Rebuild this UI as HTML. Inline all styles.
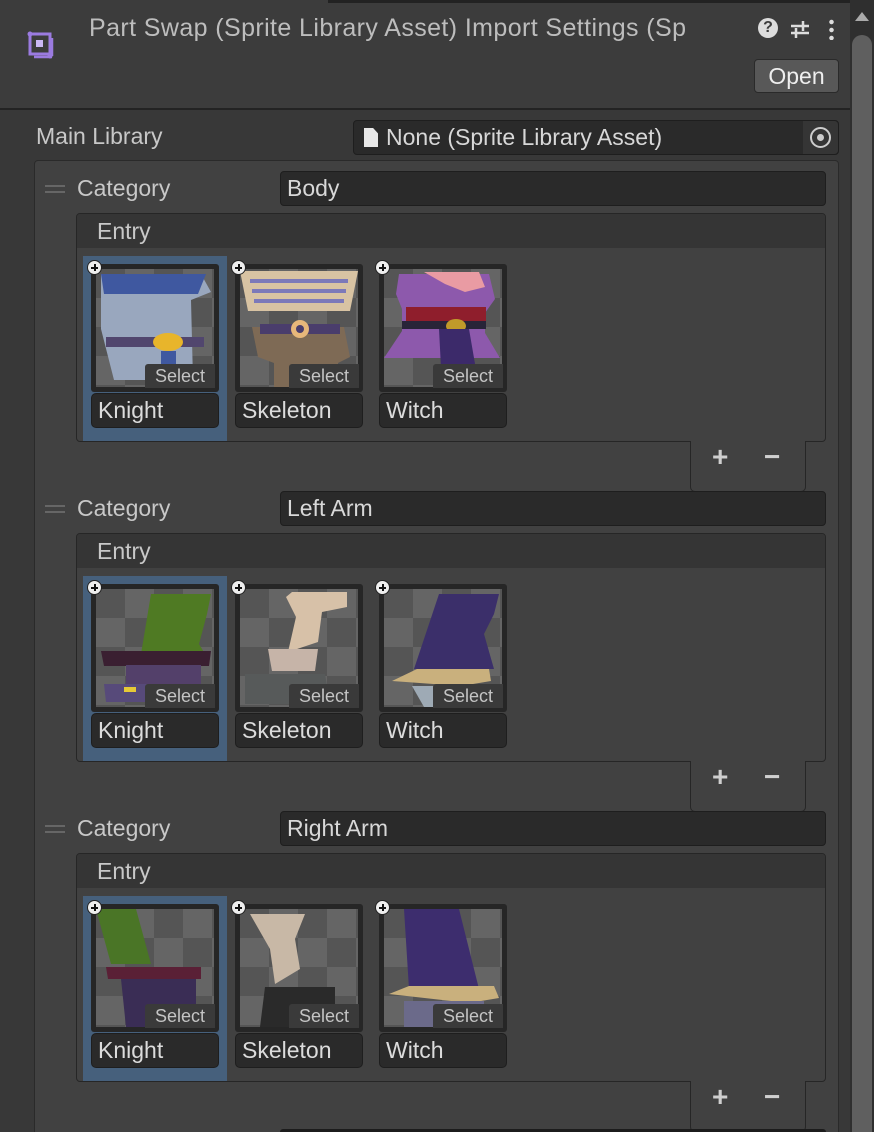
<!DOCTYPE html>
<html style="width:874px;height:1132px;overflow:hidden"><head><meta charset="utf-8"><style>
*{box-sizing:border-box;margin:0;padding:0}
body{width:874px;height:1132px;background:#383838;font-family:"Liberation Sans","DejaVu Sans",sans-serif;color:#d2d2d2;position:relative;overflow:hidden}
.a{position:absolute}
.hdr{left:0;top:0;width:850px;height:110px;background:#3c3c3c;border-bottom:2px solid #232323}
.frame{left:34px;top:160px;width:805px;height:990px;background:#414141;border:1px solid #2a2a2a;border-radius:4px}
.fld{background:#2a2a2a;border:1px solid #1e1e1e;border-radius:4px;font-size:23px;color:#d8d8d8;padding-left:6px;line-height:33px}
.lbl{font-size:23px;color:#c8c8c8}
.entry{background:#414141;border:1px solid #262626;border-radius:4px;overflow:hidden}
.eh{height:34px;background:#353535;font-size:23px;padding-left:20px;line-height:34px;color:#c8c8c8}
.sel{background:#46607c}
.tile{width:128px;height:128px;background:#262626;border-radius:3px}
.tile svg{position:absolute;left:5px;top:5px}
.st{position:absolute;right:4px;bottom:4px;width:70px;height:24px;background:#3a3a3a;font-size:18px;color:#c4c4c4;line-height:24px;text-align:center;border-top-left-radius:3px}
.pl{width:15px;height:15px;border-radius:50%;background:#eee;border:1px solid #222}
.pl:before{content:"";position:absolute;left:3px;top:6px;width:7px;height:2px;background:#111}
.pl:after{content:"";position:absolute;left:6px;top:3px;width:2px;height:7px;background:#111}
.nm{width:128px;height:35px;background:#2a2a2a;border:1px solid #1e1e1e;border-radius:5px;font-size:23px;color:#dcdcdc;padding-left:6px;line-height:33px}
.foot{width:116px;height:51px;background:#414141;border:1px solid #262626;border-top:none;border-radius:0 0 5px 5px}
.foot span{position:absolute;top:0px;font-size:28px;color:#cfcfcf;font-weight:bold}
.drag{width:20px;height:8px;border-top:2px solid #666;border-bottom:2px solid #666}
</style></head><body>
<svg width="0" height="0" style="position:absolute"><defs><pattern id="ck" width="58" height="58" patternUnits="userSpaceOnUse"><rect width="58" height="58" fill="#656565"/><rect width="29" height="29" fill="#555"/><rect x="29" y="29" width="29" height="29" fill="#555"/></pattern></defs></svg>

<div class="a hdr"></div>
<div class="a" style="left:328px;top:0;width:522px;height:3px;background:#222"></div>
<svg class="a" style="left:26px;top:30px" width="30" height="32" viewBox="0 0 30 32"><rect x="4" y="4" width="20" height="20" fill="none" stroke="#9b7be0" stroke-width="3"/><rect x="10" y="10" width="7" height="7" fill="#cbb8f5"/><circle cx="4" cy="4" r="2.5" fill="#9b7be0"/><circle cx="24" cy="26" r="2.5" fill="#9b7be0"/><path d="M8 27h18M26 8v18" stroke="#9b7be0" stroke-width="2.5"/></svg>
<div class="a" style="left:89px;top:14px;font-size:25px;color:#bdbdbd;white-space:nowrap;width:652px;overflow:hidden;letter-spacing:0.4px">Part Swap (Sprite Library Asset) Import Settings (Sp</div>
<div class="a" style="left:758px;top:18px;width:20px;height:20px;border-radius:50%;background:#ddd;color:#3c3c3c;font-size:16px;font-weight:bold;text-align:center;line-height:20px">?</div>
<svg class="a" style="left:789px;top:18px" width="22" height="22" viewBox="0 0 22 22"><path d="M2 8h18M2 15h18M14 3v10M7 10v10" stroke="#ddd" stroke-width="2.5"/></svg>
<div class="a" style="left:829px;top:18px;width:5px;height:22px;background:radial-gradient(circle,#ddd 2px,transparent 2.5px) 0 0/5px 8px"></div>
<div class="a" style="left:754px;top:59px;width:85px;height:34px;background:#585858;border:1px solid #2a2a2a;border-radius:4px;font-size:23px;color:#eee;text-align:center;line-height:32px">Open</div>
<div class="a" style="left:850px;top:0;width:24px;height:1132px;background:#2f2f2f"></div>
<div class="a" style="left:852px;top:35px;width:20px;height:1120px;background:#5f5f5f;border-radius:10px"></div>
<div class="a" style="left:855px;top:12px;width:0;height:0;border-left:7px solid transparent;border-right:7px solid transparent;border-bottom:9px solid #aaa"></div>

<div class="a lbl" style="left:36px;top:123px">Main Library</div>
<div class="a fld" style="left:353px;top:120px;width:486px;height:35px;padding-left:32px">None (Sprite Library Asset)</div>
<div class="a" style="left:364px;top:128px;width:14px;height:19px;background:#e8e8e8;clip-path:polygon(0 0,65% 0,100% 28%,100% 100%,0 100%)"></div>
<div class="a" style="left:803px;top:121px;width:35px;height:33px;background:#353535;border-radius:0 4px 4px 0"></div>
<div class="a" style="left:810px;top:127px;width:21px;height:21px;border:2px solid #ccc;border-radius:50%"></div>
<div class="a" style="left:817px;top:134px;width:7px;height:7px;background:#ccc;border-radius:50%"></div>

<div class="a frame"></div>

<div class="a" style="left:0;top:0">
<div class="a drag" style="left:45px;top:185px"></div>
<div class="a lbl" style="left:77px;top:175px">Category</div>
<div class="a fld" style="left:280px;top:171px;width:546px;height:35px">Body</div>
<div class="a entry" style="left:76px;top:213px;width:750px;height:229px"><div class="eh">Entry</div></div>
<div class="a sel" style="left:83px;top:256px;width:144px;height:185px"></div>
<div class="a foot" style="left:690px;top:441px"><span style="left:21px">+</span><span style="left:73px">−</span></div>
<div class="a tile" style="left:91px;top:264px"><svg width="118" height="118"><rect width="118" height="118" fill="url(#ck)"/><path d="M5 5h100l10 18-20 8 2 80H18L5 60z" fill="#99a7be"/><path d="M5 5h105l-8 20H8z" fill="#3f58a0"/><rect x="10" y="68" width="98" height="10" fill="#51466e"/><ellipse cx="72" cy="73" rx="15" ry="9" fill="#e8b52b"/><path d="M65 82h15v36H65z" fill="#3f58a0"/></svg><div class="st">Select</div></div>
<div class="a pl" style="left:87px;top:260px"></div>
<div class="a nm" style="left:91px;top:393px">Knight</div>
<div class="a tile" style="left:235px;top:264px"><svg width="118" height="118"><rect width="118" height="118" fill="url(#ck)"/><path d="M0 2h118l-8 40H8z" fill="#d8c3a3"/><path d="M10 12h98M12 22h94M14 32h90" stroke="#7c79b9" stroke-width="4"/><path d="M12 58h92l6 30-12 6v24H34V94L18 88z" fill="#7e6a55"/><rect x="20" y="55" width="80" height="10" fill="#4a3d6c"/><circle cx="60" cy="60" r="9" fill="#e7b77a"/><circle cx="60" cy="60" r="4" fill="#4a3d6c"/></svg><div class="st">Select</div></div>
<div class="a pl" style="left:231px;top:260px"></div>
<div class="a nm" style="left:235px;top:393px">Skeleton</div>
<div class="a tile" style="left:379px;top:264px"><svg width="118" height="118"><rect width="118" height="118" fill="url(#ck)"/><path d="M15 5h90l6 25-10 14v20l15 25H0L18 62V40L12 25z" fill="#8d59ac"/><path d="M40 3h55l6 15-20 5-20-8z" fill="#e99ba3"/><rect x="22" y="38" width="80" height="15" fill="#8f1e2c"/><rect x="18" y="52" width="84" height="8" fill="#282438"/><ellipse cx="72" cy="57" rx="10" ry="7" fill="#c19a2a"/><path d="M55 60h30l10 58H58z" fill="#3c2a6a"/></svg><div class="st">Select</div></div>
<div class="a pl" style="left:375px;top:260px"></div>
<div class="a nm" style="left:379px;top:393px">Witch</div>
</div>

<div class="a" style="left:0;top:320px">
<div class="a drag" style="left:45px;top:185px"></div>
<div class="a lbl" style="left:77px;top:175px">Category</div>
<div class="a fld" style="left:280px;top:171px;width:546px;height:35px">Left Arm</div>
<div class="a entry" style="left:76px;top:213px;width:750px;height:229px"><div class="eh">Entry</div></div>
<div class="a sel" style="left:83px;top:256px;width:144px;height:185px"></div>
<div class="a foot" style="left:690px;top:441px"><span style="left:21px">+</span><span style="left:73px">−</span></div>
<div class="a tile" style="left:91px;top:264px"><svg width="118" height="118"><rect width="118" height="118" fill="url(#ck)"/><path d="M55 5h60l-4 20-8 30 6 10H45z" fill="#4f7a23"/><path d="M5 62h110l-2 15H8z" fill="#3a1f31"/><path d="M30 76h75v20H30z" fill="#53406a"/><path d="M8 95h100v18H10z" fill="#574a7a"/><rect x="28" y="98" width="12" height="5" fill="#e6c936"/><rect x="62" y="98" width="12" height="5" fill="#e6c936"/></svg><div class="st">Select</div></div>
<div class="a pl" style="left:87px;top:260px"></div>
<div class="a nm" style="left:91px;top:393px">Knight</div>
<div class="a tile" style="left:235px;top:264px"><svg width="118" height="118"><rect width="118" height="118" fill="url(#ck)"/><path d="M52 3h55v15l-25 5-4 30-30 10 8-35-10-20z" fill="#d7c1a8"/><path d="M28 60h50l-3 22H32z" fill="#c6b4a8"/><path d="M5 85h80l5 30H5z" fill="#575a5a"/></svg><div class="st">Select</div></div>
<div class="a pl" style="left:231px;top:260px"></div>
<div class="a nm" style="left:235px;top:393px">Skeleton</div>
<div class="a tile" style="left:379px;top:264px"><svg width="118" height="118"><rect width="118" height="118" fill="url(#ck)"/><path d="M55 5h60l-5 20-10 20 10 35H30z" fill="#3b2f6a"/><path d="M8 92l25-12h72l2 12-30 5z" fill="#c9b07d"/><path d="M28 97h85v21H40z" fill="#9eaab5"/></svg><div class="st">Select</div></div>
<div class="a pl" style="left:375px;top:260px"></div>
<div class="a nm" style="left:379px;top:393px">Witch</div>
</div>

<div class="a" style="left:0;top:640px">
<div class="a drag" style="left:45px;top:185px"></div>
<div class="a lbl" style="left:77px;top:175px">Category</div>
<div class="a fld" style="left:280px;top:171px;width:546px;height:35px">Right Arm</div>
<div class="a entry" style="left:76px;top:213px;width:750px;height:229px"><div class="eh">Entry</div></div>
<div class="a sel" style="left:83px;top:256px;width:144px;height:185px"></div>
<div class="a foot" style="left:690px;top:441px"><span style="left:21px">+</span><span style="left:73px">−</span></div>
<div class="a tile" style="left:91px;top:264px"><svg width="118" height="118"><rect width="118" height="118" fill="url(#ck)"/><path d="M0 0h40l15 55H15z" fill="#4a7526"/><path d="M10 58h95v12H12z" fill="#5a2036"/><path d="M25 70h75v48H30z" fill="#3a2d55"/></svg><div class="st">Select</div></div>
<div class="a pl" style="left:87px;top:260px"></div>
<div class="a nm" style="left:91px;top:393px">Knight</div>
<div class="a tile" style="left:235px;top:264px"><svg width="118" height="118"><rect width="118" height="118" fill="url(#ck)"/><path d="M10 5h55l-10 25 5 30-25 15-5-35z" fill="#c8b8a6"/><path d="M25 78h70v40H20z" fill="#2a2a2a"/></svg><div class="st">Select</div></div>
<div class="a pl" style="left:231px;top:260px"></div>
<div class="a nm" style="left:235px;top:393px">Skeleton</div>
<div class="a tile" style="left:379px;top:264px"><svg width="118" height="118"><rect width="118" height="118" fill="url(#ck)"/><path d="M20 0h55l20 80H25z" fill="#3d2d6e"/><path d="M5 85l20-8h85l5 12-30 5z" fill="#c9b07d"/><path d="M20 92h80v26H20z" fill="#6b6a8a"/></svg><div class="st">Select</div></div>
<div class="a pl" style="left:375px;top:260px"></div>
<div class="a nm" style="left:379px;top:393px">Witch</div>
</div>

<div class="a" style="left:280px;top:1129px;width:546px;height:3px;background:#1c1c1c;border-radius:4px 4px 0 0"></div>
</body></html>
